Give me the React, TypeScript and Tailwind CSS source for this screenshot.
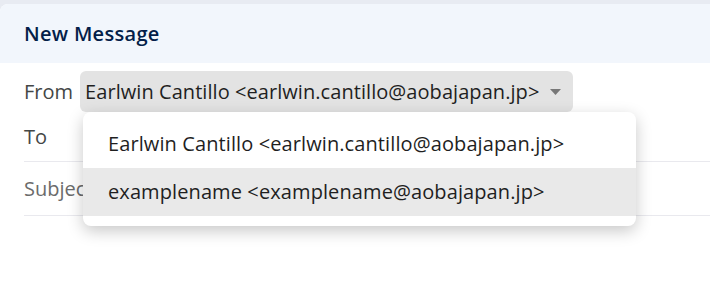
import React from "react";

const font = { fontFamily: "'Open Sans', 'Noto Sans', sans-serif" };

export default function App() {
  return (
    <div className="h-[294px] w-[710px] overflow-hidden bg-[#e8ebf2] pt-1" style={font}>
      <div className="relative h-full overflow-hidden rounded-tl-lg bg-white">
        <div className="flex h-[59px] items-center bg-[#f2f6fc] px-6">
          <h1 className="text-[20px] font-semibold tracking-[0.3px] text-[#041e49]">New Message</h1>
        </div>

        <div className="pl-6">
          <div className="flex h-[49px] items-center pt-2">
            <span className="text-[20px] text-[#444746]">From</span>
            <div className="ml-[7px] flex h-[41px] w-[493px] items-center rounded-md bg-[#e3e3e3] pl-[5px] text-[20px] tracking-[0.06px] text-[#1f1f1f]">
              <span>Earlwin Cantillo &lt;earlwin.cantillo@aobajapan.jp&gt;</span>
              <svg className="ml-auto mr-[12px]" width="11" height="6" viewBox="0 0 11 6">
                <path d="M0 0h11L5.5 6z" fill="#777" />
              </svg>
            </div>
          </div>

          <div className="flex h-[50px] items-center border-b border-[#e9e9ee] text-[20px] text-[#444746]">
            To
          </div>
          <div className="flex h-[54px] items-center border-b border-[#e9e9ee] text-[20px] text-[#6b6b6b]">
            Subject
          </div>
        </div>

        <div className="absolute left-[83px] top-[108px] w-[553px] rounded-lg bg-white pb-[10px] pt-2 shadow-[0_5px_16px_rgba(0,0,0,0.22)]">
          <div className="flex h-12 items-center px-[25px] text-[20px] tracking-[0.1px] text-[#1f1f1f]">
            Earlwin Cantillo &lt;earlwin.cantillo@aobajapan.jp&gt;
          </div>
          <div className="flex h-12 items-center bg-[#e9e9e9] px-[25px] text-[20px] tracking-[0.1px] text-[#1f1f1f]">
            examplename &lt;examplename@aobajapan.jp&gt;
          </div>
        </div>
      </div>
    </div>
  );
}
